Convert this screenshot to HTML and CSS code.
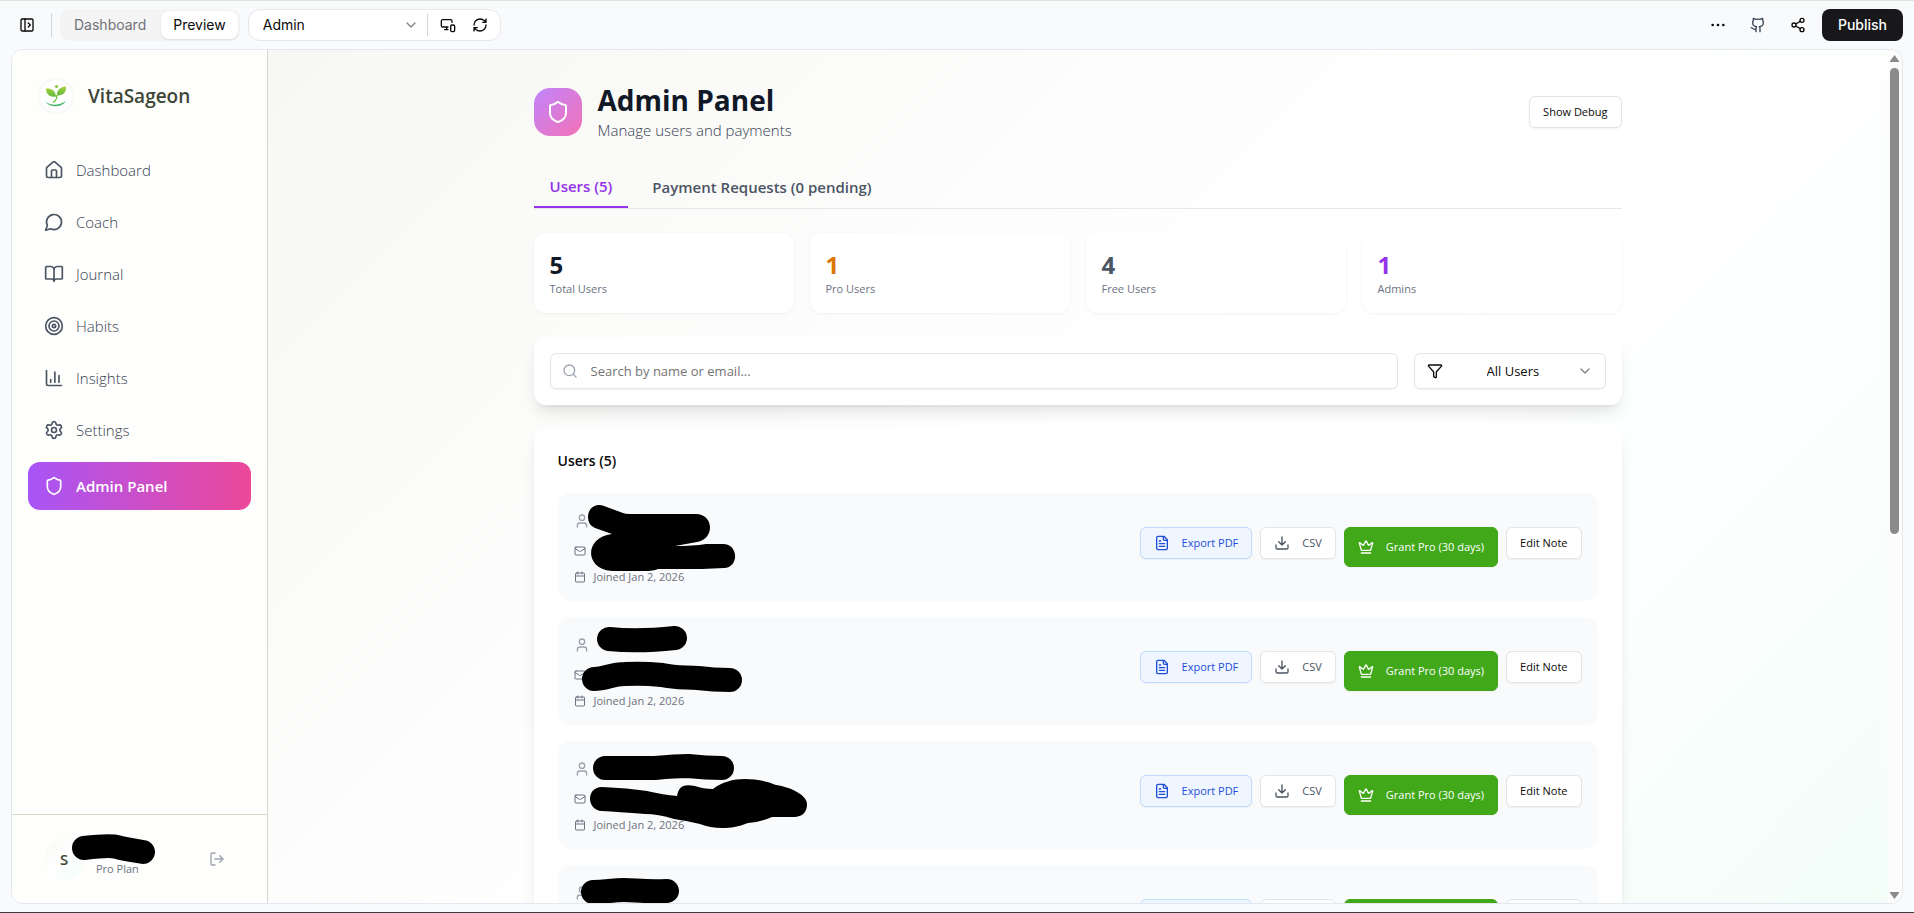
FILE: index.html
```html
<!DOCTYPE html>
<html lang="en">
<head>
<meta charset="utf-8">
<title>VitaSageon Admin Panel</title>
<link rel="stylesheet" href="styles.css">
</head>
<body>
<svg class="sprite" aria-hidden="true">
  <symbol id="i-panel" viewBox="0 0 24 24"><rect x="3" y="3" width="18" height="18" rx="2"/><path d="M9 3v18M14 9l3 3-3 3"/></symbol>
  <symbol id="i-chevron" viewBox="0 0 24 24"><path d="m6 9 6 6 6-6"/></symbol>
  <symbol id="i-devices" viewBox="0 0 24 24"><path d="M18 8V6a2 2 0 0 0-2-2H4a2 2 0 0 0-2 2v7a2 2 0 0 0 2 2h8M10 19v-3.96 3.15M7 19h5"/><rect x="16" y="12" width="6" height="10" rx="2"/></symbol>
  <symbol id="i-refresh" viewBox="0 0 24 24"><path d="M3 12a9 9 0 0 1 9-9 9.75 9.75 0 0 1 6.74 2.74L21 8M21 3v5h-5M21 12a9 9 0 0 1-9 9 9.75 9.75 0 0 1-6.74-2.74L3 16M8 16H3v5"/></symbol>
  <symbol id="i-dots" viewBox="0 0 24 24"><circle cx="12" cy="12" r="1"/><circle cx="20" cy="12" r="1"/><circle cx="4" cy="12" r="1"/></symbol>
  <symbol id="i-github" viewBox="0 0 24 24"><path d="M15 22v-4a4.8 4.8 0 0 0-1-3.5c3 0 6-2 6-5.5.08-1.25-.27-2.48-1-3.5.28-1.15.28-2.35 0-3.5 0 0-1 0-3 1.500-2.640-.5-5.360-.5-8 0C6 2 5 2 5 2c-.3 1.150-.3 2.350 0 3.500A5.403 5.403 0 0 0 4 9c0 3.500 3 5.500 6 5.500-.39.49-.68 1.050-.85 1.650-.17.6-.22 1.230-.15 1.850v4M9 18c-4.510 2-5-2-7-2"/></symbol>
  <symbol id="i-share" viewBox="0 0 24 24"><circle cx="18" cy="5" r="3"/><circle cx="6" cy="12" r="3"/><circle cx="18" cy="19" r="3"/><path d="m8.590 13.510 6.830 3.980M15.410 6.510l-6.820 3.980"/></symbol>
  <symbol id="i-home" viewBox="0 0 24 24"><path d="M15 21v-8a1 1 0 0 0-1-1h-4a1 1 0 0 0-1 1v8"/><path d="M3 10a2 2 0 0 1 .709-1.528l7-5.999a2 2 0 0 1 2.582 0l7 5.999A2 2 0 0 1 21 10v9a2 2 0 0 1-2 2H5a2 2 0 0 1-2-2z"/></symbol>
  <symbol id="i-chat" viewBox="0 0 24 24"><path d="M7.900 20A9 9 0 1 0 4 16.100L2 22Z"/></symbol>
  <symbol id="i-book" viewBox="0 0 24 24"><path d="M12 7v14M3 18a1 1 0 0 1-1-1V4a1 1 0 0 1 1-1h5a4 4 0 0 1 4 4 4 4 0 0 1 4-4h5a1 1 0 0 1 1 1v13a1 1 0 0 1-1 1h-6a3 3 0 0 0-3 3 3 3 0 0 0-3-3z"/></symbol>
  <symbol id="i-target" viewBox="0 0 24 24"><circle cx="12" cy="12" r="10"/><circle cx="12" cy="12" r="6"/><circle cx="12" cy="12" r="2"/></symbol>
  <symbol id="i-chart" viewBox="0 0 24 24"><path d="M3 3v16a2 2 0 0 0 2 2h16M18 17V9M13 17V5M8 17v-3"/></symbol>
  <symbol id="i-gear" viewBox="0 0 24 24"><path d="M9.671 4.136a2.340 2.340 0 0 1 4.659 0 2.340 2.340 0 0 0 3.319 1.915 2.340 2.340 0 0 1 2.330 4.033 2.340 2.340 0 0 0 0 3.831 2.340 2.340 0 0 1-2.330 4.033 2.340 2.340 0 0 0-3.319 1.915 2.340 2.340 0 0 1-4.659 0 2.340 2.340 0 0 0-3.320-1.915 2.340 2.340 0 0 1-2.330-4.033 2.340 2.340 0 0 0 0-3.831A2.340 2.340 0 0 1 6.350 6.051a2.340 2.340 0 0 0 3.319-1.915"/><circle cx="12" cy="12" r="3"/></symbol>
  <symbol id="i-shield" viewBox="0 0 24 24"><path d="M20 13c0 5-3.500 7.500-7.660 8.950a1 1 0 0 1-.67-.01C7.500 20.500 4 18 4 13V6a1 1 0 0 1 1-1c2 0 4.500-1.200 6.240-2.720a1.170 1.170 0 0 1 1.520 0C14.510 3.810 17 5 19 5a1 1 0 0 1 1 1z"/></symbol>
  <symbol id="i-logout" viewBox="0 0 24 24"><path d="m16 17 5-5-5-5M21 12H9M9 21H5a2 2 0 0 1-2-2V5a2 2 0 0 1 2-2h4"/></symbol>
  <symbol id="i-search" viewBox="0 0 24 24"><circle cx="11" cy="11" r="8"/><path d="m21 21-4.340-4.340"/></symbol>
  <symbol id="i-filter" viewBox="0 0 24 24"><path d="M10 20a1 1 0 0 0 .553.895l2 1A1 1 0 0 0 14 21v-7a2 2 0 0 1 .517-1.341L21.740 4.670A1 1 0 0 0 21 3H3a1 1 0 0 0-.742 1.670l7.225 7.989A2 2 0 0 1 10 14z"/></symbol>
  <symbol id="i-user" viewBox="0 0 24 24"><path d="M19 21v-2a4 4 0 0 0-4-4H9a4 4 0 0 0-4 4v2"/><circle cx="12" cy="7" r="4"/></symbol>
  <symbol id="i-mail" viewBox="0 0 24 24"><path d="m22 7-8.991 5.727a2 2 0 0 1-2.009 0L2 7"/><rect x="2" y="4" width="20" height="16" rx="2"/></symbol>
  <symbol id="i-calendar" viewBox="0 0 24 24"><path d="M8 2v4M16 2v4M3 10h18"/><rect x="3" y="4" width="18" height="18" rx="2"/></symbol>
  <symbol id="i-file" viewBox="0 0 24 24"><path d="M15 2H6a2 2 0 0 0-2 2v16a2 2 0 0 0 2 2h12a2 2 0 0 0 2-2V7ZM14 2v4a2 2 0 0 0 2 2h4M10 9H8M16 13H8M16 17H8"/></symbol>
  <symbol id="i-download" viewBox="0 0 24 24"><path d="M12 15V3M21 15v4a2 2 0 0 1-2 2H5a2 2 0 0 1-2-2v-4M7 10l5 5 5-5"/></symbol>
  <symbol id="i-crown" viewBox="0 0 24 24"><path d="M11.562 3.266a.5.5 0 0 1 .876 0L15.390 8.870a1 1 0 0 0 1.516.294L21.183 5.500a.5.5 0 0 1 .798.519l-2.834 10.246a1 1 0 0 1-.956.734H5.810a1 1 0 0 1-.957-.734L2.020 6.020a.5.5 0 0 1 .798-.519l4.276 3.664a1 1 0 0 0 1.516-.294zM5 21h14"/></symbol>
</svg>

<header class="toolbar">
  <button class="icon-btn" aria-label="Toggle panel"><svg class="icon"><use href="#i-panel"/></svg></button>
  <span class="rule"></span>
  <div class="switch">
    <button class="switch-item">Dashboard</button>
    <button class="switch-item is-on">Preview</button>
  </div>
  <div class="route">
    <label class="route-pick">
      <select class="route-select" aria-label="Page"><option>Admin</option></select>
      <svg class="icon faint"><use href="#i-chevron"/></svg>
    </label>
    <span class="rule"></span>
    <button class="icon-btn" aria-label="Device size"><svg class="icon"><use href="#i-devices"/></svg></button>
    <button class="icon-btn" aria-label="Refresh"><svg class="icon"><use href="#i-refresh"/></svg></button>
  </div>
  <div class="tools">
    <button class="icon-btn" aria-label="More"><svg class="icon"><use href="#i-dots"/></svg></button>
    <button class="icon-btn slate" aria-label="GitHub"><svg class="icon"><use href="#i-github"/></svg></button>
    <button class="icon-btn" aria-label="Share"><svg class="icon"><use href="#i-share"/></svg></button>
  </div>
  <button class="publish">Publish</button>
</header>

<div class="frame">
  <aside class="sidebar">
    <div class="brand">
      <span class="brand-mark">
        <svg viewBox="0 0 32 32" width="32" height="32">
          <defs><linearGradient id="leaf" x1="0" y1="0" x2="0" y2="1"><stop offset="0" stop-color="#a4d13a"/><stop offset="1" stop-color="#62b73f"/></linearGradient></defs>
          <circle cx="16.500" cy="6.500" r="1.600" fill="#8cc63f"/>
          <path d="M16 16.500C10 17.500 6 14.500 6 8.500c5-.5 9.500 1.500 10 8Z" fill="url(#leaf)"/>
          <path d="M17 15.500c-.5-5.500 3.500-9 9-9 .5 5.500-3 9.500-9 9Z" fill="url(#leaf)"/>
          <path d="M16.500 15c1 3-.5 5.500-3.500 7.500" fill="none" stroke="#74bd45" stroke-width="1.300"/>
          <path d="M5 21.500c6 4.500 14 4 21-.5-4 6.500-15 7.500-21 .5Z" fill="#43b36b"/>
        </svg>
      </span>
      <span class="brand-name">VitaSageon</span>
    </div>
    <nav class="nav">
      <a class="nav-item" href="#"><svg class="icon"><use href="#i-home"/></svg>Dashboard</a>
      <a class="nav-item" href="#"><svg class="icon"><use href="#i-chat"/></svg>Coach</a>
      <a class="nav-item" href="#"><svg class="icon"><use href="#i-book"/></svg>Journal</a>
      <a class="nav-item" href="#"><svg class="icon"><use href="#i-target"/></svg>Habits</a>
      <a class="nav-item" href="#"><svg class="icon"><use href="#i-chart"/></svg>Insights</a>
      <a class="nav-item" href="#"><svg class="icon"><use href="#i-gear"/></svg>Settings</a>
      <a class="nav-item is-active" href="#"><svg class="icon"><use href="#i-shield"/></svg>Admin Panel</a>
    </nav>
    <div class="account">
      <span class="avatar">S</span>
      <span class="plan">Pro Plan</span>
      <button class="icon-btn logout" aria-label="Log out"><svg class="icon"><use href="#i-logout"/></svg></button>
      <svg class="redact" viewBox="0 0 255 88"><path class="pen" d="M72 33Q98 30 105 32T131 37"/></svg>
    </div>
  </aside>

  <main class="main">
    <div class="content">
      <div class="page-head">
        <span class="page-icon"><svg class="icon"><use href="#i-shield"/></svg></span>
        <div class="page-titles">
          <h1>Admin Panel</h1>
          <p>Manage users and payments</p>
        </div>
        <button class="btn">Show Debug</button>
      </div>

      <div class="tabs">
        <button class="tab is-active">Users (5)</button>
        <button class="tab">Payment Requests (0 pending)</button>
      </div>

      <div class="stats">
        <div class="stat"><strong>5</strong><span>Total Users</span></div>
        <div class="stat pro"><strong>1</strong><span>Pro Users</span></div>
        <div class="stat free"><strong>4</strong><span>Free Users</span></div>
        <div class="stat admin"><strong>1</strong><span>Admins</span></div>
      </div>

      <div class="card filters">
        <label class="search">
          <svg class="icon"><use href="#i-search"/></svg>
          <input type="text" aria-label="Search users" placeholder="Search by name or email...">
        </label>
        <label class="filter">
          <svg class="icon"><use href="#i-filter"/></svg>
          <select aria-label="Filter users"><option>All Users</option></select>
          <svg class="icon faint"><use href="#i-chevron"/></svg>
        </label>
      </div>

      <section class="card users">
        <h2>Users (5)</h2>
        <article class="user">
          <div class="info">
            <div class="name"><svg class="icon"><use href="#i-user"/></svg></div>
            <div class="mail"><svg class="icon"><use href="#i-mail"/></svg></div>
            <div class="joined"><svg class="icon"><use href="#i-calendar"/></svg>Joined Jan 2, 2026</div>
          </div>
          <div class="actions">
            <button class="btn blue"><svg class="icon"><use href="#i-file"/></svg>Export PDF</button>
            <button class="btn gray"><svg class="icon"><use href="#i-download"/></svg>CSV</button>
            <button class="btn green"><svg class="icon"><use href="#i-crown"/></svg>Grant Pro (30 days)</button>
            <button class="btn">Edit Note</button>
          </div>
          <svg class="redact" viewBox="0 0 260 108"><path d="M30 24C30 14 39 10 46 13L65 20Q67 21 72 21H138C156 21 157 46 139 49Q128 51 117 53Q135 53 148 51L165 51C181 51 181 75 166 75L144 76H100Q95 78 87 78H55C28 78 24 45 54 41L37 35Q30 32 30 24Z"/></svg>
        </article>
        <article class="user">
          <div class="info">
            <div class="name"><svg class="icon"><use href="#i-user"/></svg></div>
            <div class="mail"><svg class="icon"><use href="#i-mail"/></svg></div>
            <div class="joined"><svg class="icon"><use href="#i-calendar"/></svg>Joined Jan 2, 2026</div>
          </div>
          <div class="actions">
            <button class="btn blue"><svg class="icon"><use href="#i-file"/></svg>Export PDF</button>
            <button class="btn gray"><svg class="icon"><use href="#i-download"/></svg>CSV</button>
            <button class="btn green"><svg class="icon"><use href="#i-crown"/></svg>Grant Pro (30 days)</button>
            <button class="btn">Edit Note</button>
          </div>
          <svg class="redact" viewBox="0 0 260 108"><path class="pen" d="M51 22Q80 25 117 21M36 62C48 62 53 57 67 57Q85 56 104 58C118 61 126 60 140 61Q155 63 172 63"/></svg>
        </article>
        <article class="user">
          <div class="info">
            <div class="name"><svg class="icon"><use href="#i-user"/></svg></div>
            <div class="mail"><svg class="icon"><use href="#i-mail"/></svg></div>
            <div class="joined"><svg class="icon"><use href="#i-calendar"/></svg>Joined Jan 2, 2026</div>
          </div>
          <div class="actions">
            <button class="btn blue"><svg class="icon"><use href="#i-file"/></svg>Export PDF</button>
            <button class="btn gray"><svg class="icon"><use href="#i-download"/></svg>CSV</button>
            <button class="btn green"><svg class="icon"><use href="#i-crown"/></svg>Grant Pro (30 days)</button>
            <button class="btn">Edit Note</button>
          </div>
          <svg class="redact" viewBox="0 0 260 108"><path class="pen" d="M47 27H97Q118 25 130 25Q148 27 164 27"/><path d="M44 46Q70 47 89 50Q106 54 119 55C121 44 127 43 137 45Q145 48 155 48C164 41 175 38 187 38Q204 38 218 44C236 47 249 55 249 63Q249 75 237 76H214Q203 81 190 82C180 86 173 87 164 87Q152 87 142 83Q130 80 116 78Q100 73 87 73Q60 71 44 70C28 69 28 46 44 46Z"/></svg>
        </article>
        <article class="user">
          <div class="info">
            <div class="name"><svg class="icon"><use href="#i-user"/></svg></div>
            <div class="mail"><svg class="icon"><use href="#i-mail"/></svg></div>
            <div class="joined"><svg class="icon"><use href="#i-calendar"/></svg>Joined Jan 2, 2026</div>
          </div>
          <div class="actions">
            <button class="btn blue"><svg class="icon"><use href="#i-file"/></svg>Export PDF</button>
            <button class="btn gray"><svg class="icon"><use href="#i-download"/></svg>CSV</button>
            <button class="btn green"><svg class="icon"><use href="#i-crown"/></svg>Grant Pro (30 days)</button>
            <button class="btn">Edit Note</button>
          </div>
          <svg class="redact" viewBox="0 0 260 108"><path class="pen" d="M35 27C48 27 54 25 66 25S85 27 109 26"/></svg>
        </article>
      </section>
    </div>
  </main>
  <div class="scroll" aria-hidden="true">
    <svg viewBox="0 0 9 7" width="9" height="7"><path d="M4.500 0 9 6v1H0V6Z"/></svg>
    <span class="scroll-lane"><span class="scroll-thumb"></span></span>
    <svg viewBox="0 0 9 7" width="9" height="7"><path d="M4.500 7 9 1V0H0v1Z"/></svg>
  </div>
</div>
</body>
</html>
```

FILE: styles.css
```css
* { box-sizing: border-box; }

body {
  margin: 0;
  height: 100vh;
  display: flex;
  flex-direction: column;
  padding: 0 11px 8px;
  border-top: 1px solid #dfe2de;
  border-bottom: 1px solid #3c3c40;
  background: #f8fafc;
  color: #0a0a0a;
  font-family: "Open Sans", "Noto Sans", sans-serif;
  font-size: 15px;
  line-height: 24px;
  overflow: hidden;
}

button, input, select { font: inherit; color: inherit; }
button { border: 0; padding: 0; background: none; cursor: pointer; }
h1, h2, p { margin: 0; }

.sprite { position: absolute; width: 0; height: 0; }

.icon {
  width: 16px;
  height: 16px;
  flex: none;
  fill: none;
  stroke: currentColor;
  stroke-width: 2;
  stroke-linecap: round;
  stroke-linejoin: round;
}
.faint { opacity: 0.5; }

/* Toolbar */
.toolbar {
  flex: none;
  height: 48px;
  display: flex;
  align-items: center;
  font-family: Inter, sans-serif;
  font-size: 14px;
  line-height: 20px;
}
.icon-btn { width: 32px; height: 32px; display: grid; place-items: center; }
.slate { color: #334155; }
.toolbar > .icon-btn { width: 31px; margin-right: 1px; }
.rule { width: 1px; height: 24px; background: #d4d4d8; }
.toolbar > .rule { margin: 0 8px; }
.switch { display: flex; gap: 3px; padding: 2px; border-radius: 10px; background: #f4f4f5; }
.switch-item { height: 28px; padding: 0 12px; border-radius: 8px; color: #71717a; }
.switch-item.is-on { color: #0a0a0a; background: #fff; box-shadow: 0 1px 2px rgba(0, 0, 0, 0.1); }
.route {
  display: flex;
  align-items: center;
  height: 32px;
  width: 253px;
  margin-left: 8px;
  padding-right: 4px;
  border: 1px solid #e5e7eb;
  border-radius: 12px;
  background: #fff;
}
.route .rule { height: 22px; margin-right: 4px; }
.route-pick { flex: 1; display: flex; align-items: center; padding: 0 8px 0 14px; }
.route-select { flex: 1; appearance: none; border: 0; background: none; padding: 0; }
.tools { display: flex; gap: 8px; margin-left: auto; margin-right: 8px; }
.publish { height: 32px; padding: 0 16px; border-radius: 8px; background: #18181b; color: #fff; font-weight: 500; }

/* Preview frame */
.frame {
  flex: 1;
  min-height: 0;
  display: flex;
  border: 1px solid #e2e8f0;
  border-radius: 12px;
  overflow: hidden;
  background: #fff;
}

.sidebar {
  flex: none;
  width: 256px;
  display: flex;
  flex-direction: column;
  border-right: 1px solid #d6d8cc;
  background: #fefefd;
}
.brand { display: flex; align-items: center; gap: 16px; padding: 28px 28px 32px; }
.brand-mark { width: 32px; height: 32px; border-radius: 50%; background: #fff; box-shadow: 0 0 4px rgba(0, 0, 0, 0.08); }
.brand-mark svg { display: block; }
.brand-name { font-size: 19px; line-height: 36px; font-weight: 600; color: #3d4635; }
.nav { flex: 1; display: flex; flex-direction: column; gap: 4px; padding: 0 16px; }
.nav-item {
  display: flex;
  align-items: center;
  gap: 12px;
  height: 48px;
  padding: 0 16px;
  border-radius: 12px;
  color: #374151;
  font-weight: 300;
  text-decoration: none;
}
.nav-item .icon { width: 20px; height: 20px; color: #4b5563; }
.nav-item.is-active {
  margin-top: 4px;
  color: #fff;
  font-weight: 600;
  background: linear-gradient(90deg, #a855f7, #ec4899);
}
.nav-item.is-active .icon { color: #fff; }
.account {
  position: relative;
  display: flex;
  align-items: center;
  gap: 12px;
  padding: 24px 32px;
  border-top: 1px solid #d6dac6;
}
.avatar {
  width: 40px;
  height: 40px;
  border-radius: 50%;
  display: grid;
  place-items: center;
  background: linear-gradient(135deg, #f7f7f5, #fff 50%, #effdf6);
  color: #3d4635;
  font-weight: 600;
}
.plan { align-self: flex-end; padding-bottom: 2px; font-size: 11px; line-height: 16px; color: #6b7280; }
.logout { margin-left: auto; margin-right: 4px; width: 28px; color: #9ca3af; }

/* Marker strokes over private details */
.redact { position: absolute; left: 0; top: 0; height: 108px; width: 260px; fill: #000; pointer-events: none; }
.account .redact { width: 255px; height: 88px; }
.pen { fill: none; stroke: #000; stroke-width: 24; stroke-linecap: round; stroke-linejoin: round; }

/* Page */
.main {
  flex: 1;
  min-width: 0;
  overflow: hidden;
  padding: 32px 32px 0;
  background: linear-gradient(135deg, #f7f7f5, #fff 50%, #fcfffd 78%, #f2fdf8);
}
.content { max-width: 1088px; margin: 0 auto; display: flex; flex-direction: column; gap: 24px; }

.page-head { display: flex; align-items: center; gap: 16px; }
.page-icon {
  width: 48px;
  height: 48px;
  display: grid;
  place-items: center;
  border-radius: 16px;
  color: #fff;
  background: linear-gradient(135deg, #c084fc, #f472b6);
}
.page-icon .icon { width: 24px; height: 24px; }
.page-titles { flex: 1; }
.page-titles h1 { font-size: 28px; line-height: 36px; font-weight: 700; color: #111827; }
.page-titles p { font-weight: 300; color: #374151; }

.btn {
  display: flex;
  align-items: center;
  gap: 12px;
  height: 32px;
  padding: 0 13px;
  border: 1px solid #e5e5e5;
  border-radius: 6px;
  background: #fff;
  box-shadow: 0 1px 2px rgba(0, 0, 0, 0.05);
  font-size: 11px;
  line-height: 16px;
}
.blue { color: #1d4ed8; background: #eff6ff; border-color: #bfdbfe; }
.gray { color: #4b5563; }
.green { height: 40px; color: #fff; background: #41a81a; border-color: #41a81a; }

.tabs { display: flex; align-items: center; gap: 8px; border-bottom: 1px solid #e5e7eb; }
.tab { padding: 8px 16px; font-weight: 600; color: #4b5563; }
.tab.is-active { color: #9333ea; border-bottom: 2px solid #9333ea; }

.stats { display: grid; grid-template-columns: repeat(4, 1fr); gap: 16px; }
.stat {
  display: flex;
  flex-direction: column;
  padding: 16px;
  border-radius: 12px;
  background: rgba(255, 255, 255, 0.9);
  box-shadow: 0 1px 3px rgba(0, 0, 0, 0.06);
}
.stat strong { font-size: 24px; line-height: 32px; color: #111827; }
.stat span { font-size: 11px; line-height: 16px; color: #6b7280; }
.stat.pro strong { color: #d97706; }
.stat.free strong { color: #4b5563; }
.stat.admin strong { color: #9333ea; }

.card {
  border-radius: 12px;
  background: rgba(255, 255, 255, 0.95);
  box-shadow: 0 10px 15px -3px rgba(0, 0, 0, 0.1), 0 4px 6px -4px rgba(0, 0, 0, 0.1);
}
.filters { display: flex; gap: 16px; padding: 16px; font-size: 13px; line-height: 20px; }
.search, .filter {
  display: flex;
  align-items: center;
  height: 36px;
  padding: 0 12px;
  border: 1px solid #e5e5e5;
  border-radius: 6px;
  background: #fff;
  box-shadow: 0 1px 2px rgba(0, 0, 0, 0.05);
}
.search { flex: 1; gap: 13px; padding-left: 11px; }
.search .icon { color: #9ca3af; }
.search input { flex: 1; border: 0; padding: 0; outline: 0; background: none; }
.search input::placeholder { color: #737373; opacity: 1; }
.filter { width: 192px; }
.filter select { flex: 1; min-width: 0; appearance: none; border: 0; background: none; padding: 0 0 0 44px; }

.users { display: flex; flex-direction: column; gap: 16px; padding: 24px; }
.users h2 { margin-bottom: 8px; font-size: 14px; line-height: 16px; font-weight: 600; }
.user {
  position: relative;
  display: flex;
  align-items: center;
  justify-content: space-between;
  padding: 16px;
  border-radius: 12px;
  background: #f9fafb;
}
.info { display: flex; flex-direction: column; gap: 8px; color: #6b7280; }
.info > div { display: flex; align-items: center; gap: 8px; }
.info .name { height: 24px; color: #9ca3af; }
.mail { height: 20px; }
.joined { font-size: 11px; line-height: 16px; }
.mail .icon, .joined .icon { width: 12px; height: 12px; }
.actions { display: flex; align-items: flex-start; gap: 8px; }

/* Scrollbar */
.scroll {
  flex: none;
  width: 15px;
  display: flex;
  flex-direction: column;
  align-items: center;
  gap: 6px;
  padding: 5px 0 4px;
  background: #fcfcfc;
  fill: #8b8b8b;
}
.scroll-lane { flex: 1; width: 9px; }
.scroll-thumb { display: block; height: 57%; border-radius: 5px; background: #8b8b8b; }
```
